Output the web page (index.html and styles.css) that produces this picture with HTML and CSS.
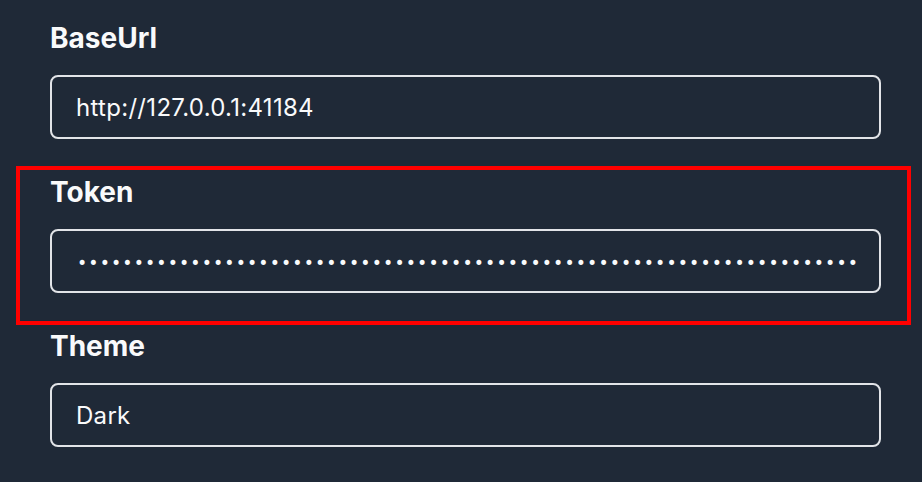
FILE: index.html
```html
<!DOCTYPE html>
<html lang="en">
<head>
  <meta charset="UTF-8">
  <meta name="viewport" content="width=device-width, initial-scale=1.0">
  <title>Settings</title>
  <link rel="stylesheet" href="styles.css">
</head>
<body>
  <div class="settings">
    <div class="form-group">
      <label for="baseUrl">BaseUrl</label>
      <input type="text" id="baseUrl" value="http://127.0.0.1:41184">
    </div>

    <div class="form-group highlight">
      <label for="token">Token</label>
      <input type="password" id="token" class="token" value="0123456789abcdef0123456789abcdef0123456789abcdef0123456789abcdef01234">
    </div>

    <div class="form-group">
      <label for="theme">Theme</label>
      <select id="theme">
        <option value="dark" selected>Dark</option>
        <option value="light">Light</option>
      </select>
    </div>
  </div>
</body>
</html>
```

FILE: styles.css
```css
html, body {
  margin: 0;
  background-color: #1f2937;
}
body {
  font-family: Inter, "Noto Sans", Arial, sans-serif;
  color: #f9fafb;
  height: 482px;
  overflow: hidden;
}
.settings {
  width: 831px;
  padding: 20px 0 0 50px;
}
.form-group {
  position: relative;
  margin-bottom: 35px;
}
label {
  display: block;
  font-size: 28px;
  line-height: 36px;
  font-weight: 700;
  margin-bottom: 19px;
}
input, select {
  display: block;
  box-sizing: border-box;
  width: 100%;
  height: 64px;
  margin: 0;
  padding: 0 24px;
  border: 2px solid #e2e4e8;
  border-radius: 8px;
  background-color: #1f2937;
  color: #f9fafb;
  font-family: inherit;
  font-size: 24px;
  letter-spacing: 0.3px;
  outline: none;
  appearance: none;
}
/* mono font so every mask dot has a known advance */
.token {
  padding: 4px 4px 0 25px;
  font-family: "DejaVu Sans Mono", monospace;
  font-size: 17px;
  letter-spacing: 1.1px;
}
/* red annotation box round the token field */
.highlight::after {
  content: "";
  position: absolute;
  top: -8px;
  left: -34px;
  right: -30px;
  bottom: -32px;
  border: 4px solid #ff0000;
  pointer-events: none;
}
```
